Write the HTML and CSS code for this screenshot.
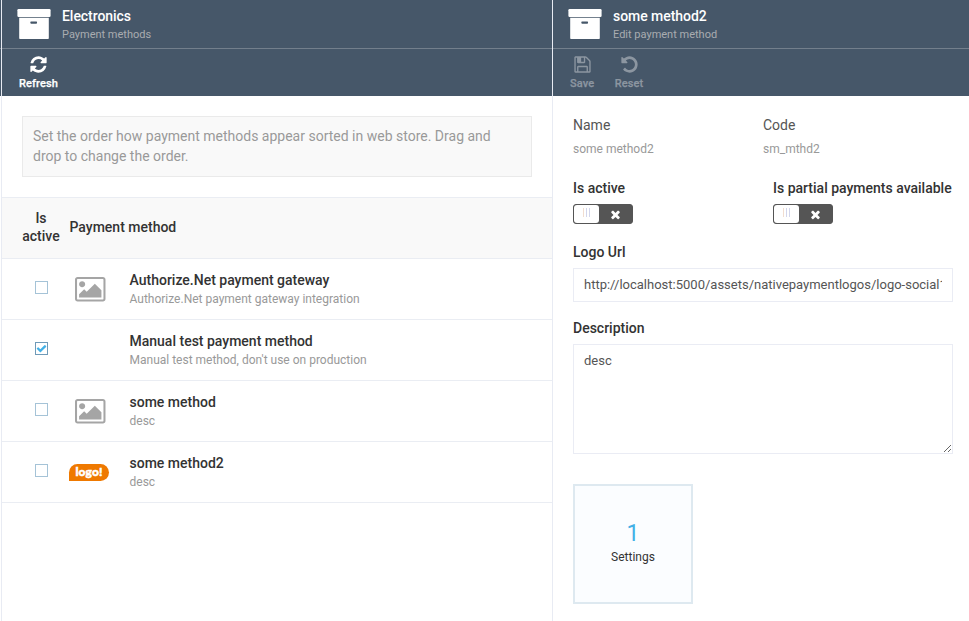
FILE: index.html
```html
<!DOCTYPE html>
<html lang="en">
<head>
<meta charset="utf-8">
<title>Payment methods</title>
<link rel="stylesheet" href="styles.css">
</head>
<body>
<svg class="defs" width="0" height="0">
  <symbol id="archive" viewBox="0 0 34 32"><rect x="0.4" y="1" width="33.2" height="8" rx="1.2"/><path fill-rule="evenodd" d="M2.2 9.7H31.8V30.2Q31.8 31 31 31H3Q2.2 31 2.2 30.2ZM14 13.5Q13.3 13.5 13.3 14.6T14 15.7H19.4Q20.1 15.7 20.1 14.6T19.4 13.5Z"/></symbol>
  <symbol id="refresh" viewBox="0 0 1792 1792"><path d="M1639 1056q0 5-1 7-64 268-268 434.5t-478 166.5q-146 0-282.5-55t-243.5-157l-129 129q-19 19-45 19t-45-19-19-45v-448q0-26 19-45t45-19h448q26 0 45 19t19 45-19 45l-137 137q71 66 161 102t187 36q134 0 250-65t186-179q11-17 53-117 8-23 30-23h192q13 0 22.5 9.5t9.5 22.5zm25-800v448q0 26-19 45t-45 19h-448q-26 0-45-19t-19-45 19-45l138-138q-148-137-349-137-134 0-250 65t-186 179q-11 17-53 117-8 23-30 23h-199q-13 0-22.5-9.5t-9.5-22.5v-7q65-268 270-434.5t480-166.5q146 0 284 55.5t245 156.5l130-129q19-19 45-19t45 19 19 45z"/></symbol>
  <symbol id="save" viewBox="0 0 1792 1792"><path d="M512 1536h768v-384h-768v384zm896 0h128v-896q0-14-10-38.5t-20-34.5l-281-281q-10-10-34-20t-39-10v416q0 40-28 68t-68 28h-576q-40 0-68-28t-28-68v-416h-128v1280h128v-416q0-40 28-68t68-28h832q40 0 68 28t28 68v416zm-384-928v-320q0-13-9.5-22.5t-22.5-9.5h-192q-13 0-22.5 9.5t-9.5 22.5v320q0 13 9.5 22.5t22.5 9.5h192q13 0 22.5-9.5t9.5-22.5zm640 32v928q0 40-28 68t-68 28h-1344q-40 0-68-28t-28-68v-1344q0-40 28-68t68-28h928q40 0 88 20t76 48l280 280q28 28 48 76t20 88z"/></symbol>
  <symbol id="undo" viewBox="0 0 1792 1792"><path d="M1664 896q0 156-61 298t-164 245-245 164-298 61q-172 0-327-72.5t-264-204.5q-7-10-6.5-22.5t8.5-20.5l137-138q10-9 25-9 16 2 23 12 73 95 179 147t225 52q104 0 198.5-40.5t163.5-109.5 109.5-163.5 40.5-198.5-40.5-198.5-109.5-163.5-163.5-109.5-198.5-40.5q-98 0-188 35.5t-160 101.5l137 138q31 30 14 69-17 40-59 40h-448q-26 0-45-19t-19-45v-448q0-42 40-59 39-17 69 14l130 129q107-101 244.5-156.5t284.5-55.5q156 0 298 61t245 164 164 245 61 298z"/></symbol>
  <symbol id="times" viewBox="0 0 1792 1792"><path d="M1490 1322q0 40-28 68l-136 136q-28 28-68 28t-68-28l-294-294-294 294q-28 28-68 28t-68-28l-136-136q-28-28-28-68t28-68l294-294-294-294q-28-28-28-68t28-68l136-136q28-28 68-28t68 28l294 294 294-294q28-28 68-28t68 28l136 136q28 28 28 68t-28 68l-294 294 294 294q28 28 28 68z"/></symbol>
  <symbol id="check" viewBox="0 0 1792 1792"><path d="M1671 566q0 40-28 68l-724 724-136 136q-28 28-68 28t-68-28l-136-136-362-362q-28-28-28-68t28-68l136-136q28-28 68-28t68 28l294 295 656-657q28-28 68-28t68 28l136 136q28 28 28 68z"/></symbol>
  <symbol id="image" viewBox="0 0 2048 1792"><path d="M704 576q0 80-56 136t-136 56-136-56-56-136 56-136 136-56 136 56 56 136zm1024 384v448h-1408v-192l320-320 160 160 512-512zm96-704h-1600q-13 0-22.500 9.500t-9.500 22.500v1216q0 13 9.500 22.500t22.500 9.500h1600q13 0 22.500-9.500t9.500-22.500v-1216q0-13-9.500-22.500t-22.500-9.500zm160 32v1216q0 66-47 113t-113 47h-1600q-66 0-113-47t-47-113v-1216q0-66 47-113t113-47h1600q66 0 113 47t47 113z"/></symbol>
</svg>
<main class="workspace">
  <section class="blade blade-list">
    <header class="head">
      <svg class="head-ico"><use href="#archive"/></svg>
      <div><h1 class="title">Electronics</h1><p class="subtitle">Payment methods</p></div>
    </header>
    <nav class="toolbar">
      <button class="tool"><svg class="tool-ico"><use href="#refresh"/></svg><span>Refresh</span></button>
    </nav>
    <p class="note">Set the order how payment methods appear sorted in web store. Drag and drop to change the order.</p>
    <div class="row row-head"><span class="col-active">Is active</span><span>Payment method</span></div>
    <div class="row">
      <span class="box"></span>
      <span class="logo"><svg class="pic"><use href="#image"/></svg></span>
      <div><p class="name">Authorize.Net payment gateway</p><p class="descr">Authorize.Net payment gateway integration</p></div>
    </div>
    <div class="row">
      <span class="box box-on"><svg class="tick"><use href="#check"/></svg></span>
      <span class="logo"></span>
      <div><p class="name">Manual test payment method</p><p class="descr">Manual test method, don't use on production</p></div>
    </div>
    <div class="row">
      <span class="box"></span>
      <span class="logo"><svg class="pic"><use href="#image"/></svg></span>
      <div><p class="name">some method</p><p class="descr">desc</p></div>
    </div>
    <div class="row">
      <span class="box"></span>
      <span class="logo"><span class="brand">logo!</span></span>
      <div><p class="name">some method2</p><p class="descr">desc</p></div>
    </div>
  </section>
  <section class="blade blade-edit">
    <header class="head">
      <svg class="head-ico"><use href="#archive"/></svg>
      <div><h1 class="title">some method2</h1><p class="subtitle">Edit payment method</p></div>
    </header>
    <nav class="toolbar">
      <button class="tool off"><svg class="tool-ico"><use href="#save"/></svg><span>Save</span></button>
      <button class="tool off"><svg class="tool-ico"><use href="#undo"/></svg><span>Reset</span></button>
    </nav>
    <form class="form">
      <div class="facts">
        <div><p class="fact">Name</p><p class="value">some method2</p></div>
        <div><p class="fact">Code</p><p class="value">sm_mthd2</p></div>
      </div>
      <div class="switches">
        <div><p class="label">Is active</p><span class="switch"><span class="knob"><i></i><i></i><i></i></span><svg class="cross"><use href="#times"/></svg></span></div>
        <div><p class="label">Is partial payments available</p><span class="switch"><span class="knob"><i></i><i></i><i></i></span><svg class="cross"><use href="#times"/></svg></span></div>
      </div>
      <label class="label" for="logo">Logo Url</label>
      <input class="field" id="logo" value="http://localhost:5000/assets/nativepaymentlogos/logo-social1.png">
      <label class="label" for="desc">Description</label>
      <textarea class="field area" id="desc">desc</textarea>
      <div class="widget"><span class="count">1</span><span>Settings</span></div>
    </form>
  </section>
</main>
</body>
</html>
```
FILE: styles.css
```css
* { box-sizing: border-box; margin: 0; padding: 0; }
body { font-family: Roboto, sans-serif; font-size: 14px; color: #333; background: #fff; overflow: hidden; }
.defs { display: block; height: 0; }
svg { fill: currentColor; display: block; flex: none; }
.workspace { display: flex; height: 621px; background: linear-gradient(#465769 48px, #7b8793 48px 49px, #465769 49px 96px, #fff 96px); }
.blade { border-left: 1px solid #e8ebf3; background: #fff; }
.blade-list { width: 551px; margin-left: 1px; flex: none; }
.blade-edit { flex: 1; min-width: 0; }
.head { height: 49px; background: #465769; border-bottom: 1px solid #737f8c; color: #fff; display: flex; padding: 8px 0 0 15px; gap: 11px; }
.head-ico { width: 34px; height: 32px; }
.title { font-size: 14px; font-weight: 500; line-height: 16px; letter-spacing: -0.05px; }
.subtitle { font-size: 11px; line-height: 14px; margin-top: 4px; color: #a9acb0; }
.toolbar { height: 47px; background: #465769; display: flex; padding: 6px 0 0 12px; gap: 9px; }
.tool { border: 0; background: none; color: #fff; font: 500 11px/14px Roboto, sans-serif; letter-spacing: .1px; -webkit-text-stroke: .25px; display: flex; flex-direction: column; align-items: center; padding: 0 5px; gap: 2px; }
.tool + .tool { margin-left: 1.5px; }
.tool-ico { width: 19px; height: 19px; margin: 0 0 1px .5px; }
.off { color: #8c96a1; }
.note { margin: 20px; height: 61px; border: 1px solid #eaeaea; background: #f9f9f9; padding: 9px 10px; line-height: 20px; color: #999; }
.row { height: 61px; border-bottom: 1px solid #eaedf3; display: flex; align-items: flex-start; }
.row-head { height: 62px; border-top: 1px solid #eaedf3; background: #f9f9f9; align-items: center; line-height: 18px; font-weight: 500; padding-bottom: 2px; }
.col-active { width: 38px; margin: 0 10px 0 20px; text-align: center; }
.row-head > span:last-child { margin-left: -.5px; }
.box { width: 13px; height: 13px; border: 1px solid #a5c3d7; margin: 22px 0 0 33px; flex: none; }
.box-on { border-color: #6f9ab8; }
.tick { width: 11px; height: 11px; color: #43b0e6; }
.logo { width: 40px; height: 60px; margin: 0 20.5px 0 21px; display: flex; align-items: center; justify-content: center; flex: none; }
.pic { width: 32.5px; height: 28.5px; color: #a5a5a5; margin-left: 2.5px; }
.brand { width: 40px; height: 17px; background: #ef7900; border-radius: 9px 9px 9px 0; color: #fff; font: 900 12px/15px Lato, sans-serif; text-align: center; margin-top: 1px; letter-spacing: .1px; -webkit-text-stroke: .5px; }
.name { font-weight: 500; line-height: 18px; margin-top: 12px; }
.descr { font-size: 12px; line-height: 16px; margin-top: 2px; color: #999; }
.form { padding: 20px 16px 0 20px; }
.facts { display: grid; grid-template-columns: 190px 1fr; }
.fact { line-height: 18px; color: #555; }
.value { font-size: 12px; line-height: 16px; margin-top: 7px; color: #999; }
.switches { display: grid; grid-template-columns: 200px 1fr; margin: 22px 0 19px; white-space: nowrap; }
.label { display: block; font-weight: 500; line-height: 18px; }
.switch { width: 60px; height: 20px; border: 1px solid #555; border-radius: 3px; background: #555; display: flex; margin-top: 7px; align-items: center; }
.knob { width: 25px; height: 18px; border-radius: 3px; background: #fff; display: flex; justify-content: center; align-items: center; gap: 2px; padding-bottom: 3px; }
.knob i { width: 1px; height: 9px; background: #d3d6ec; }
.knob i:first-child { background: #f1ddd0; }
.cross { width: 13px; height: 13px; color: #fff; margin-left: 9.5px; }
.field { display: block; width: 380px; height: 34px; border: 1px solid #eaecf4; padding: 0 10px 2px; margin: 7px 0 17px; font: 13px/18px Roboto, sans-serif; color: #555; outline: 0; background: #fff; }
.area { height: 110px; padding-top: 7px; margin-bottom: 30px; resize: both; }
.widget { width: 120px; height: 120px; border: 2px solid #dee9f0; background: #fbfdff; display: flex; flex-direction: column; align-items: center; font-size: 12px; line-height: 16px; padding-top: 34px; color: #333; }
.count { font-size: 23px; line-height: 28px; color: #43b0e6; margin-bottom: 1px; }
```
